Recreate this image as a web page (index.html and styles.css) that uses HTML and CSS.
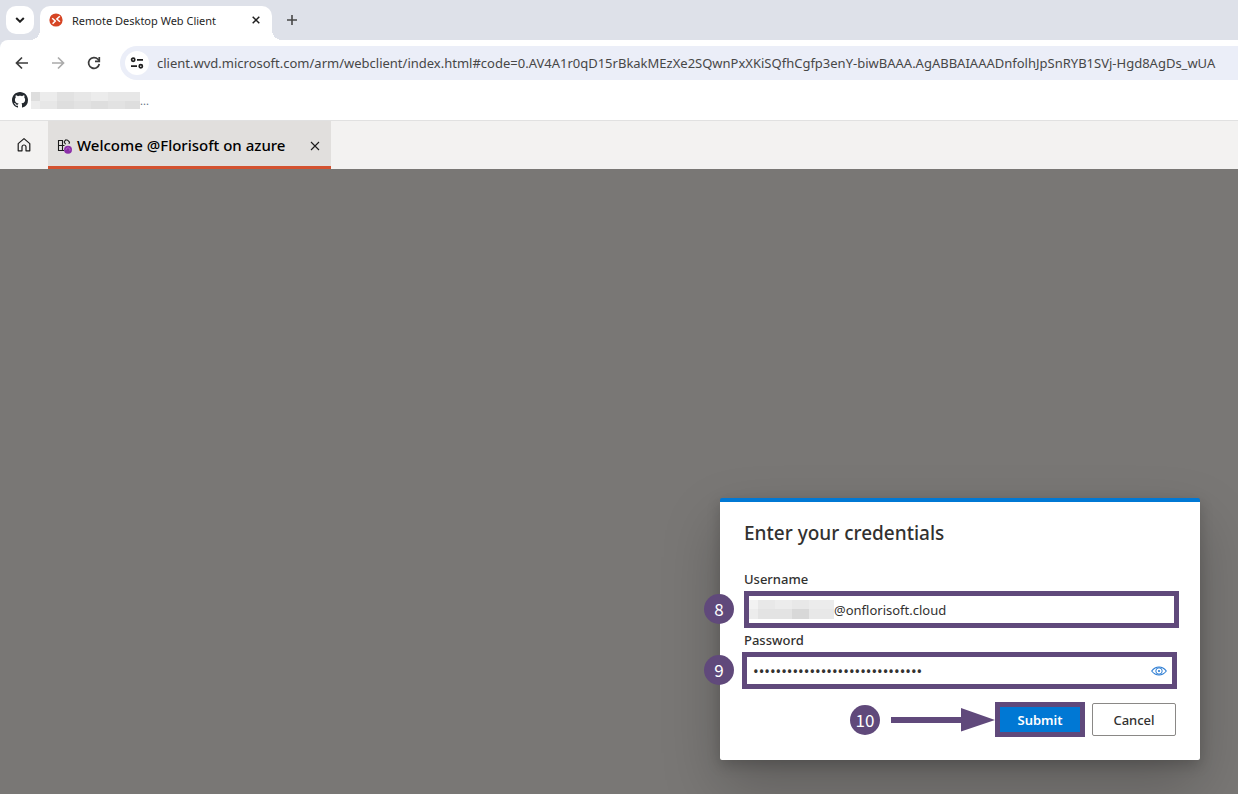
FILE: index.html
```html
<!DOCTYPE html>
<html lang="en">
<head>
<meta charset="utf-8">
<title>Remote Desktop Web Client</title>
<link rel="stylesheet" href="styles.css">
</head>
<body>
<header class="browser">
  <div class="tabstrip">
    <button class="tab-search" aria-label="Search tabs"><svg width="10" height="6" viewBox="0 0 10 6"><path d="M1.2 1 5 4.7 8.8 1" fill="none" stroke="#1f1f1f" stroke-width="2"/></svg></button>
    <div class="tab">
      <svg width="14" height="14" viewBox="0 0 14 14"><circle cx="7" cy="7" r="6.6" fill="#d64524"/><path d="M3.200 5.200 6.300 8 3.600 10.800M10.800 3.200 7.800 6 11 8.800" fill="none" stroke="#fff" stroke-width="1.5"/></svg>
      <span class="tab-title">Remote Desktop Web Client</span>
      <button class="icon-button" aria-label="Close tab"><svg width="8" height="8" viewBox="0 0 8 8"><path d="m.7.7 6.600 6.600m0-6.600L.7 7.300" stroke="#1f1f1f" stroke-width="1.500"/></svg></button>
    </div>
    <button class="icon-button new-tab" aria-label="New tab"><svg width="12" height="12" viewBox="0 0 12 12"><path d="M6 1v10M1 6h10" stroke="#474747" stroke-width="1.6"/></svg></button>
  </div>
  <div class="toolbar">
    <button class="icon-button nav" aria-label="Back"><svg width="14" height="14" viewBox="0 0 14 14"><path d="M13 7H2M7 1.5 1.5 7 7 12.5" fill="none" stroke="#3c3c3c" stroke-width="1.7"/></svg></button>
    <button class="icon-button nav" aria-label="Forward"><svg width="14" height="14" viewBox="0 0 14 14"><path d="M1 7h11M7 1.5 12.5 7 7 12.5" fill="none" stroke="#ababab" stroke-width="1.7"/></svg></button>
    <button class="icon-button nav" aria-label="Reload"><svg width="14" height="14" viewBox="0 0 14 14"><path d="M12.3 8A5.4 5.4 0 1 1 11 3.3L12 4.5" fill="none" stroke="#3c3c3c" stroke-width="1.7"/><path d="M12.3 1v4.4H8" fill="none" stroke="#3c3c3c" stroke-width="1.7"/></svg></button>
    <div class="address">
      <button class="site-info" aria-label="View site information"><svg width="14" height="12" viewBox="0 0 14 12"><g fill="none" stroke="#1f1f1f" stroke-width="1.7"><circle cx="3.2" cy="2.8" r="1.6"/><path d="M7 2.8h6M1 9.2h6"/><circle cx="10.8" cy="9.2" r="1.6"/></g></svg></button>
      <input class="url" type="text" aria-label="Address" value="client.wvd.microsoft.com/arm/webclient/index.html#code=0.AV4A1r0qD15rBkakMEzXe2SQwnPxXKiSQfhCgfp3enY-biwBAAA.AgABBAIAAADnfolhJpSnRYB1SVj-Hgd8AgDs_wUA">
    </div>
  </div>
  <nav class="bookmarks">
    <a class="bookmark" href="#" aria-label="Bookmark">
      <svg width="16" height="16" viewBox="0 0 16 16"><path fill="#24292f" d="M8 0C3.58 0 0 3.58 0 8c0 3.54 2.29 6.53 5.47 7.59.4.07.55-.17.55-.38 0-.19-.01-.82-.01-1.49-2.01.37-2.53-.49-2.69-.94-.09-.23-.48-.94-.82-1.13-.28-.15-.68-.52-.01-.53.63-.01 1.08.58 1.23.82.72 1.21 1.87.87 2.33.66.07-.52.28-.87.51-1.07-1.78-.2-3.64-.89-3.64-3.95 0-.87.31-1.59.82-2.15-.08-.2-.36-1.02.08-2.12 0 0 .67-.21 2.2.82.64-.18 1.32-.27 2-.27s1.36.09 2 .27c1.53-1.04 2.2-.82 2.2-.82.44 1.1.16 1.92.08 2.12.51.56.82 1.27.82 2.15 0 3.07-1.87 3.75-3.65 3.95.29.25.54.73.54 1.48 0 1.07-.01 1.93-.01 2.2 0 .21.15.46.55.38A8.01 8.01 0 0 0 16 8c0-4.42-3.58-8-8-8"/></svg>
      <svg class="mosaic" width="109" height="17" viewBox="0 0 109 17"><path fill="#e7e7e7" d="M0 0h109v17H0z"/><path fill="#dedede" d="M0 0h9v9H0zM26 9h17v8H26zM60 9h17v8H60zM94 9h15v8H94z"/><path fill="#ececec" d="M9 0h17v9H9zM60 0h17v9H60zM0 9h9v8H0z"/><path fill="#e2e2e2" d="M26 0h17v9H26zM43 9h17v8H43zM77 9h17v8H77z"/></svg>
      <span>...</span>
    </a>
  </nav>
</header>
<nav class="appbar">
  <button class="home" aria-label="Home"><svg width="14" height="16" viewBox="0 0 14 16"><path d="M1.2 6.6 7 1.6l5.8 5v7.2H9V10a2 2 0 0 0-4 0v3.8H1.2z" fill="none" stroke="#1b1b1b" stroke-width="1.2" stroke-linejoin="round"/></svg></button>
  <div class="session-tab">
    <svg width="16" height="16" viewBox="0 0 16 16"><path d="M2.500 2.500h4v10h-4zM2.500 7.500h6M6.500 12.500h1.500M8 3.800l1.800-2 1.800.4 1.900 2-.6 1.500M8 3.800l1.600 2.400" fill="none" stroke="#1b1b1b" stroke-width="1.1"/><circle cx="12" cy="11.700" r="4" fill="#8b2fa8"/><path d="M10 12a2 2 0 1 1 3.800.7" fill="none" stroke="#b36bc9"/></svg>
    <span class="session-title">Welcome @Florisoft on azure</span>
    <button class="icon-button" aria-label="Close session"><svg width="10" height="10" viewBox="0 0 10 10"><path d="m1 1 8 8m0-8L1 9" stroke="#1b1b1b" stroke-width="1.1"/></svg></button>
  </div>
</nav>
<main class="session">
  <form class="dialog" role="dialog" aria-labelledby="dialog-title">
    <h1 class="dialog-title" id="dialog-title">Enter your credentials</h1>
    <label class="label" for="username">Username</label>
    <div class="field">
      <svg class="mosaic" width="85" height="19" viewBox="0 0 85 19"><path fill="#ececec" d="M0 0h85v19H0z"/><path fill="#e3e3e3" d="M9 9h17v10H9zM26 9h17v10H26z"/><path fill="#d8d8d8" d="M43 9h17v10H43z"/><path fill="#e8e8e8" d="M9 0h17v9H9zM43 0h17v9H43zM60 9h25v10H60z"/><path fill="#f2f2f2" d="M0 0h9v9H0z"/></svg>
      <input class="input" id="username" type="text" value="@onflorisoft.cloud">
      <span class="highlight highlight-username"></span>
      <span class="badge badge-field">8</span>
    </div>
    <label class="label" for="password">Password</label>
    <div class="field">
      <input class="input password" id="password" type="password" value="aaaaaaaaaaaaaaaaaaaaaaaaaaaaaa">
      <button class="icon-button" type="button" aria-label="Show password"><svg width="16" height="10" viewBox="0 0 16 10"><path d="M.7 5C2.8 2.200 5.200 1 8 1s5.200 1.200 7.300 4C13.200 7.800 10.800 9 8 9S2.800 7.800.7 5z" fill="none" stroke="#2b7cd3" stroke-width="1.100"/><circle cx="8" cy="5" r="3.200" fill="none" stroke="#2b7cd3"/><circle cx="8" cy="5" r="1.100" fill="#2b7cd3"/></svg></button>
      <span class="highlight highlight-password"></span>
      <span class="badge badge-field">9</span>
    </div>
    <div class="actions">
      <span class="badge">10</span>
      <svg class="arrow" width="105" height="24" viewBox="0 0 105 24"><path fill="#60497b" d="M1 9h70V0l34 12-34 11.500V15H1z"/></svg>
      <button class="submit" type="button">Submit</button>
      <button class="cancel" type="button">Cancel</button>
    </div>
  </form>
</main>
</body>
</html>
```
FILE: styles.css
```css
* { box-sizing: border-box; }
body {
  margin: 0;
  min-height: 100vh;
  display: flex;
  flex-direction: column;
  overflow: hidden;
  font-family: "Noto Sans", "Open Sans", sans-serif;
  color: #323130;
}
button, input { font: inherit; color: inherit; border: 0; padding: 0; margin: 0; background: none; }
svg { display: block; flex: none; }

.browser { background: #dee1e9; }
.tabstrip { display: flex; align-items: flex-end; height: 40px; padding-left: 6px; }
.tab-search {
  display: grid;
  place-items: center;
  width: 28px;
  height: 28px;
  margin: 0 6px 6px 0;
  border-radius: 10px;
  background: #fff;
}
.tab {
  position: relative;
  display: flex;
  align-items: center;
  gap: 9px;
  width: 232px;
  height: 34px;
  padding: 0 6px 6px 9px;
  border-radius: 10px 10px 0 0;
  background: #fff;
}
.tab::before, .tab::after {
  content: "";
  position: absolute;
  bottom: 0;
  width: 10px;
  height: 10px;
}
.tab::before { right: 100%; background: radial-gradient(circle at 0 0, transparent 10px, #fff 10px); }
.tab::after { left: 100%; background: radial-gradient(circle at 100% 0, transparent 10px, #fff 10px); }
.tab-title { flex: 1; font-size: 11px; white-space: nowrap; color: #1f1f1f; }
.icon-button { display: grid; place-items: center; width: 20px; height: 20px; }
.new-tab { margin: 0 0 10px 10px; }

.toolbar {
  display: flex;
  align-items: center;
  height: 46px;
  padding-left: 4px;
  border-radius: 8px 0 0 0;
  background: #fff;
}
.nav { width: 36px; height: 34px; }
.address {
  flex: 1;
  min-width: 0;
  display: flex;
  align-items: center;
  gap: 8px;
  height: 34px;
  margin-left: 8px;
  padding-left: 5px;
  border-radius: 17px 0 0 17px;
  background: #ebeef8;
}
.site-info { display: grid; place-items: center; flex: none; width: 24px; height: 24px; border-radius: 50%; background: #fff; }
.url { flex: 1; min-width: 0; font-size: 13px; color: #474747; }

.bookmarks { height: 35px; padding: 5px 12px; background: #fff; border-bottom: 1px solid #e1e1e1; }
.bookmark { display: inline-flex; align-items: center; gap: 3px; font-size: 11px; line-height: 17px; color: #5f6f80; text-decoration: none; }
.bookmark span { margin-left: -3px; }

.appbar { display: flex; height: 48px; background: #f3f2f1; }
.home { display: grid; place-items: center; width: 48px; }
.session-tab {
  display: flex;
  align-items: center;
  gap: 5px;
  width: 283px;
  padding: 4px 6px 0 8px;
  background: #e1dfdd;
  border-bottom: 3px solid #d35230;
}
.session-title { flex: 1; font-size: 15px; line-height: 20px; padding-bottom: 2px; font-weight: 500; white-space: nowrap; color: #000; }

.session {
  flex: 1;
  display: flex;
  align-items: flex-end;
  justify-content: flex-end;
  padding: 0 38px 34px;
  background: #797775;
}
.dialog {
  width: 480px;
  padding: 18px 24px 23px;
  border-top: 4px solid #0078d4;
  border-radius: 2px;
  background: #fff;
  box-shadow: 0 26px 58px rgba(0, 0, 0, .22), 0 5px 14px rgba(0, 0, 0, .18);
}
.dialog-title { margin: 0 0 21px; font-size: 19px; line-height: 26px; font-weight: 500; }
.label { display: block; font-size: 13px; line-height: 24px; font-weight: 500; }
.field { position: relative; display: flex; align-items: center; height: 37px; padding: 0 7px 0 5px; }
.input { flex: 1; min-width: 0; font-size: 13px; outline: 0; }
.password { padding-left: 4px; font-size: 15px; }
.highlight { position: absolute; inset: 0; border: 5px solid #60497b; pointer-events: none; }
.highlight-username { right: -3px; }
.highlight-password { left: -2px; right: -1px; }
.badge {
  display: grid;
  place-items: center;
  width: 30px;
  height: 30px;
  border-radius: 50%;
  background: #60497b;
  color: #fff;
  font-family: "Noto Sans CJK JP", sans-serif;
  font-size: 17px;
  line-height: 30px;
}
.badge-field { position: absolute; left: -40px; top: 3px; }
.actions { display: flex; align-items: center; justify-content: flex-end; height: 35px; margin-top: 13px; font-size: 13px; }
.arrow { margin-left: 10px; }
.submit { width: 90px; height: 35px; border: 5px solid #60497b; background: #0078d4; color: #fff; font-weight: 600; }
.cancel { width: 84px; height: 33px; margin-left: 7px; border: 1px solid #8a8886; border-radius: 2px; font-weight: 500; }
```
